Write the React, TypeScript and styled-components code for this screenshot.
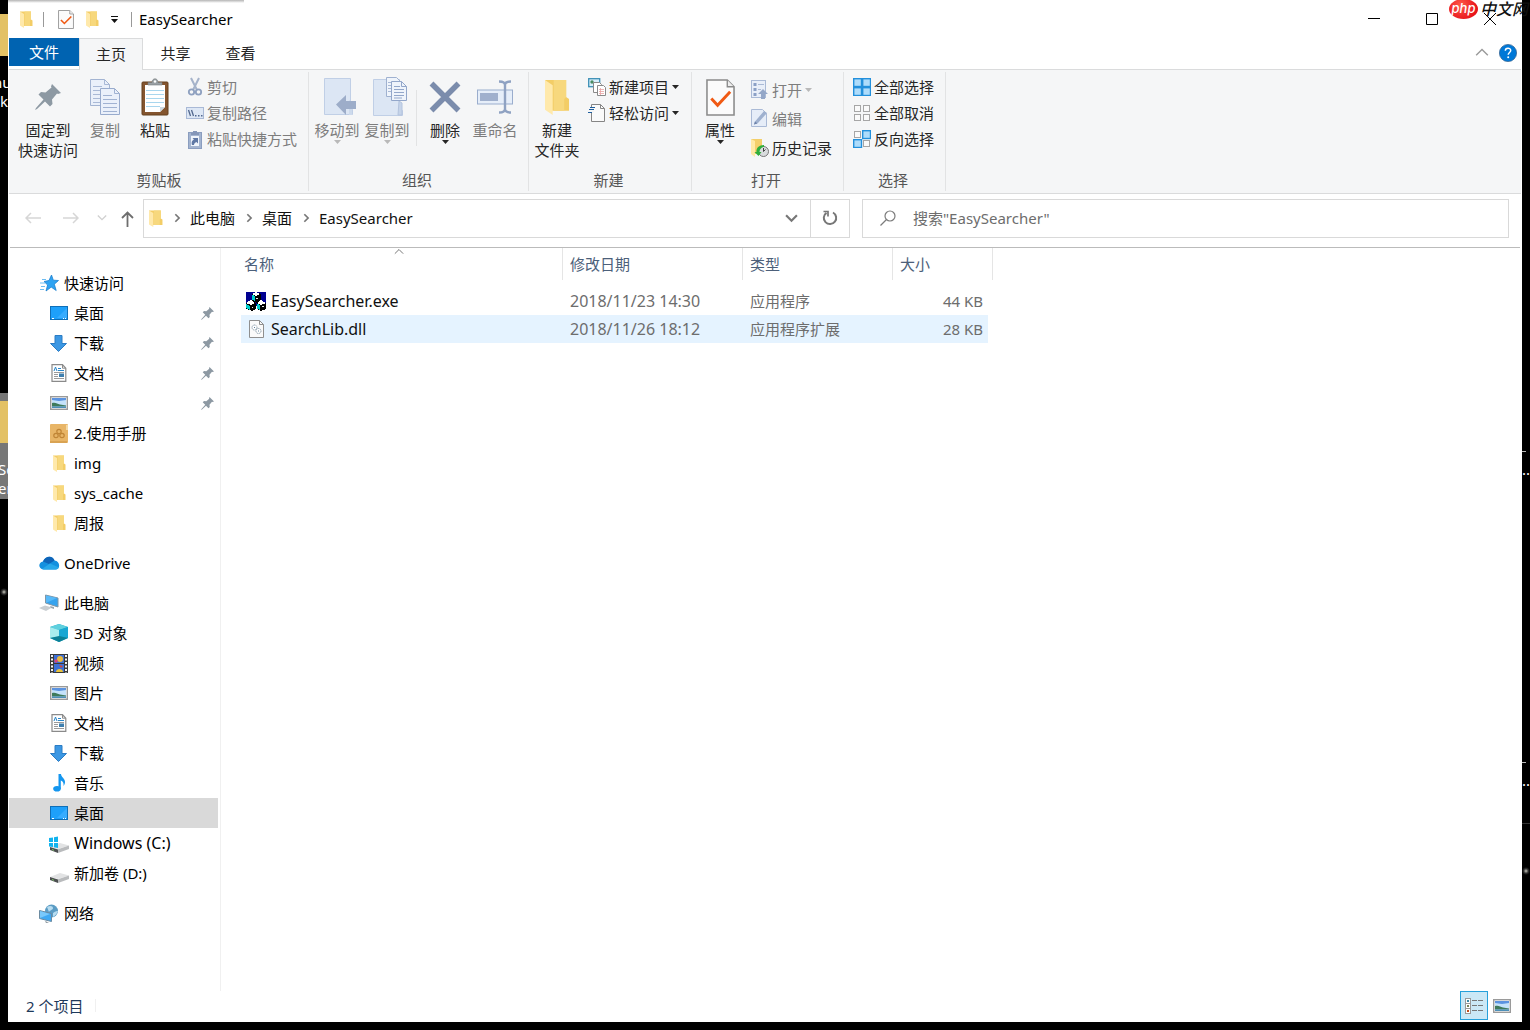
import React from 'react';
import styled, { createGlobalStyle, css } from 'styled-components';

const GlobalStyle = createGlobalStyle`
  * { box-sizing: border-box; }
  html, body { margin: 0; height: 100%; background: #000; }
  body, button, input, table {
    font-family: "Noto Sans", "Noto Sans CJK SC", sans-serif;
    font-size: 15px;
    line-height: 20px;
    color: #000;
  }
  button { border: 0; padding: 0; margin: 0; background: transparent; white-space: nowrap; }
  svg { display: block; flex: none; }
`;

/* ---------- desktop ---------- */

const Desktop = styled.div`
  position: relative;
  display: flex;
  height: 100vh;
  padding: 0 8px 8px;
  overflow: hidden;
  background: #000;
`;

const EdgeStrip = styled.div<{ $side: 'left' | 'right' }>`
  position: absolute;
  top: 0;
  bottom: 0;
  ${(p) => p.$side}: 0;
  width: 8px;
  overflow: hidden;
  color: #fff;
`;

const DesktopTile = styled.div<{ $top: number; $height: number; $color: string; $width?: number }>`
  position: absolute;
  left: 0;
  width: ${(p) => p.$width ?? 8}px;
  top: ${(p) => p.$top}px;
  height: ${(p) => p.$height}px;
  background: ${(p) => p.$color};
`;

const DesktopText = styled.span<{ $top: number; $left: number }>`
  position: absolute;
  top: ${(p) => p.$top}px;
  left: ${(p) => p.$left}px;
`;

const Star = styled.i<{ $top: number }>`
  position: absolute;
  top: ${(p) => p.$top}px;
  left: 0;
  width: 8px;
  height: 8px;
  background: radial-gradient(circle, #c9c9bd 0, #333 40%, transparent 70%);
`;

/* ---------- window frame ---------- */

const Window = styled.main`
  position: relative;
  flex: 1;
  min-width: 0;
  display: flex;
  flex-direction: column;
  padding: 0 1px;
  background: #fff;
`;

const TopShadow = styled.div`
  position: absolute;
  top: 0;
  left: 0;
  width: 236px;
  height: 3px;
  background: linear-gradient(#b4b4b4, #fff);
`;

const TitleBar = styled.header`
  display: flex;
  align-items: center;
  height: 38px;
  flex: none;
  padding: 0 2px 0 11px;
`;

const Divider = styled.i<{ $color: string; $height: number }>`
  width: 1px;
  height: ${(p) => p.$height}px;
  background: ${(p) => p.$color};
  flex: none;
`;

const QuickTools = styled.div`
  display: flex;
  align-items: center;
  gap: 10px;
  margin-right: 7px;
  button { display: flex; }
`;

const QuickGroup = styled.div`
  display: flex;
  align-items: center;
  gap: 12px;
  padding: 0 3px 0 4px;
`;

const Title = styled.h1`
  flex: 1;
  margin: 0;
  font-size: 15px;
  font-weight: 400;
`;

const ControlButton = styled.button`
  display: flex;
  width: 58px;
  height: 38px;
  align-items: center;
  justify-content: center;
`;

const Watermark = styled.div`
  position: absolute;
  top: -1px;
  right: -8px;
  display: flex;
  align-items: center;
  gap: 2px;
  width: 81px;
  height: 20px;
  white-space: nowrap;
  font-style: italic;
  font-weight: 500;
  font-size: 16px;
  color: #111;
`;

const WatermarkOval = styled.span`
  flex: none;
  width: 29px;
  height: 20px;
  border-radius: 50%;
  background: radial-gradient(circle at 40% 30%, #ff5a4a, #e8151b 70%);
  color: #fff;
  font-family: Inter, sans-serif;
  font-size: 13px;
  line-height: 19px;
  text-align: center;
`;

/* ---------- tabs ---------- */

const Tabs = styled.nav`
  display: flex;
  align-items: flex-start;
  height: 32px;
  flex: none;
  border-bottom: 1px solid #dadbdc;
`;

const Tab = styled.button<{ $kind?: 'file' | 'active' }>`
  width: 65px;
  height: 30px;
  color: #262626;
  ${(p) =>
    p.$kind === 'file' &&
    css`
      width: 70px;
      height: 28px;
      background: #0063b1;
      color: #fff;
    `}
  ${(p) =>
    p.$kind === 'active' &&
    css`
      width: 64px;
      height: 32px;
      padding-bottom: 2px;
      background: #f5f6f7;
      border: 1px solid #dadbdc;
      border-bottom: 0;
    `}
`;

const TabTools = styled.div`
  display: flex;
  align-items: center;
  gap: 10px;
  height: 30px;
  margin-left: auto;
  padding-right: 4px;
  button { display: flex; }
`;

/* ---------- ribbon ---------- */

const Ribbon = styled.section`
  display: flex;
  flex: none;
  height: 124px;
  background: #f5f6f7;
  border-bottom: 1px solid #dadbdc;
`;

const Group = styled.section<{ $width: number; $pad: number }>`
  display: flex;
  flex-direction: column;
  justify-content: space-between;
  width: ${(p) => p.$width}px;
  margin: 2px 0;
  padding-left: ${(p) => p.$pad}px;
  padding-bottom: 1px;
  border-right: 1px solid #e2e3e4;
`;

const GroupBody = styled.div`
  display: flex;
  padding-top: 2px;
`;

const GroupLabel = styled.h2`
  margin: 0 0 0 -6px;
  font-size: 15px;
  font-weight: 400;
  color: #555;
  text-align: center;
`;

const LargeButton = styled.button<{ $wide?: boolean; $dim?: boolean }>`
  display: flex;
  flex-direction: column;
  align-items: center;
  width: ${(p) => (p.$wide ? 64 : 50)}px;
  color: ${(p) => (p.$dim ? '#7d7d7d' : '#262626')};
`;

const LargeIcon = styled.span`
  display: flex;
  height: 46px;
  align-items: center;
`;

const SmallColumn = styled.div<{ $row: number }>`
  display: flex;
  flex-direction: column;
  padding: ${(p) => (p.$row > 26 ? 1 : 0)}px 0 0 6px;
  button { height: ${(p) => p.$row}px; }
`;

const SmallButton = styled.button<{ $dim?: boolean }>`
  display: flex;
  align-items: center;
  gap: 3px;
  color: ${(p) => (p.$dim ? '#7d7d7d' : '#262626')};
`;

const RibbonDivider = styled.i`
  width: 1px;
  height: 56px;
  margin: 16px 3px 0 4px;
  background: #e2e3e4;
`;

/* ---------- address row ---------- */

const AddressRow = styled.section`
  display: flex;
  align-items: center;
  flex: none;
  height: 54px;
  margin: 0 1px;
  padding: 0 11px 5px 15px;
  border-bottom: 1px solid #bbb;
`;

const NavButtons = styled.div`
  display: grid;
  grid-template-columns: 38px 34px 24px 13px;
  align-items: center;
  flex: none;
  margin-right: 9px;
  button { display: flex; }
`;

const AddressBox = styled.div`
  display: flex;
  align-items: center;
  flex: 700 1 0;
  height: 39px;
  margin-right: 12px;
  padding-left: 5px;
  border: 1px solid #d9d9d9;
`;

const Crumb = styled.button`
  color: #111;
`;

const Chevron = styled.span`
  display: flex;
  justify-content: center;
  width: 27px;
`;

const AddressEnd = styled.button<{ $line?: boolean }>`
  display: flex;
  align-items: center;
  justify-content: center;
  width: 38px;
  height: 37px;
  ${(p) => p.$line && 'width: 39px; border-left: 1px solid #d9d9d9;'}
`;

const Spacer = styled.span`
  flex: 1;
`;

const SearchBox = styled.label`
  display: flex;
  align-items: center;
  gap: 17px;
  flex: 628 1 0;
  height: 39px;
  padding-left: 17px;
  border: 1px solid #d9d9d9;
`;

const SearchInput = styled.input`
  flex: 1;
  min-width: 0;
  border: 0;
  padding: 0;
  outline: 0;
  background: transparent;
  &::placeholder { color: #6d6d6d; opacity: 1; }
`;

/* ---------- content ---------- */

const Body = styled.div`
  display: flex;
  flex: 1;
  min-height: 0;
`;

const NavPane = styled.nav`
  flex: none;
  width: 212px;
  padding: 20px 2px 0 0;
  border-right: 1px solid #f0f0f0;
`;

const NavSection = styled.ul`
  list-style: none;
  margin: 0 0 10px;
  padding: 0;
`;

const NavItem = styled.button<{ $level: number; $selected?: boolean; $latin?: boolean }>`
  display: flex;
  align-items: center;
  gap: 4px;
  width: 100%;
  height: 30px;
  padding-left: ${(p) => (p.$level ? 39 : 29)}px;
  font-size: ${(p) => (p.$latin ? 16 : 15)}px;
  background: ${(p) => (p.$selected ? '#d9d9d9' : 'transparent')};
`;

const NavIcon = styled.span`
  display: flex;
  align-items: center;
  justify-content: center;
  width: 22px;
`;

const NavPin = styled.span`
  margin: 0 4px 0 auto;
`;

const FilePane = styled.div`
  flex: 1;
  min-width: 0;
  padding-left: 15px;
`;

const FileTable = styled.table`
  width: 757px;
  table-layout: fixed;
  border-collapse: collapse;
  text-align: left;
`;

const HeadCell = styled.th`
  height: 39px;
  padding: 0;
  vertical-align: top;
  font-weight: 400;
  color: #4c607a;
`;

const HeadLabel = styled.div<{ $first?: boolean }>`
  position: relative;
  height: 32px;
  padding: 6px 0 0 ${(p) => (p.$first ? 8 : 7)}px;
  border-right: 1px solid #e5e5e5;
`;

const SortMark = styled.span`
  position: absolute;
  top: -1px;
  left: 50%;
  margin-left: -5px;
`;

const FileRow = styled.tr<{ $hover?: boolean }>`
  height: 28px;
  ${(p) =>
    p.$hover &&
    css`
      background: linear-gradient(#e5f3ff, #e5f3ff) 5px 0 / calc(100% - 10px) 100% no-repeat;
    `}
`;

const Cell = styled.td<{ $right?: boolean; $latin?: boolean }>`
  padding: 0 10px 0 7px;
  font-size: ${(p) => (p.$latin ? 16 : 15)}px;
  color: #6d6d6d;
  text-align: ${(p) => (p.$right ? 'right' : 'left')};
`;

const FileName = styled.div`
  display: flex;
  align-items: center;
  gap: 4px;
  padding-left: 2px;
  color: #111;
`;

const StatusBar = styled.footer`
  display: flex;
  align-items: center;
  flex: none;
  height: 31px;
  padding: 0 5px 2px 17px;
  color: #1e395b;
`;

const StatusText = styled.span`
  margin-right: 12px;
`;

const ViewButton = styled.button<{ $on?: boolean }>`
  display: flex;
  align-items: center;
  justify-content: center;
  width: 28px;
  height: 29px;
  ${(p) => p.$on && 'background: #cbe8f6; border: 1px solid #26a0da;'}
`;

/* ---------- icons ---------- */

const Folder = ({ w = 13, h = 17 }: { w?: number; h?: number }) => (
  <svg width={w} height={h} viewBox="0 0 13 17" preserveAspectRatio="none">
    <path d="M0 .5h11v8l1.500 1V15H3z" fill="#f3cd66" />
    <path d="M4.500.5H11v8l-1 1V15H4.500z" fill="#f7d87d" />
    <path d="M0 .5L4 3v14l-4-2.500z" fill="#ffe9ab" />
  </svg>
);

const CheckDoc = ({ w = 16, h = 19 }: { w?: number; h?: number }) => (
  <svg width={w} height={h} viewBox="0 0 30 38" preserveAspectRatio="none">
    <path d="M1 1h21l7 7v29H1z" fill="#fbfbfb" stroke="#8a8a8a" strokeWidth="1.6" />
    <path d="M22 1v7h7" fill="#eee" stroke="#8a8a8a" strokeWidth="1.4" />
    <path d="M5.500 20l6.500 7 13-14" fill="none" stroke="#f05a14" strokeWidth="3" />
  </svg>
);

const DownMark = ({ color = '#262626' }: { color?: string }) => (
  <svg width="7" height="4" viewBox="0 0 7 4">
    <path d="M0 0h7L3.500 4z" fill={color} />
  </svg>
);

const PinIcon = ({ s = 13 }: { s?: number }) => (
  <svg width={s} height={s} viewBox="0 0 26 26">
    <path d="M17 0l9 9-3 1-1-.5-5 6 .5 4.500-2.500 2.500-5-5L2 25l-2 1 1-2 7.500-8.500-5-5L6 8l4.500.5 6-5-.5-1z" fill="#8d99a3" />
  </svg>
);

const CopyPages = ({ w = 30, h = 36 }: { w?: number; h?: number }) => (
  <svg width={w} height={h} viewBox="0 0 30 36">
    <path d="M.5.5h14l5 5v21H.5z" fill="#eaf0fa" stroke="#a3b4d2" />
    <path d="M14.500.5v5h5M3 7.500h9M3 11.500h14M3 15.500h14M3 19.500h14M3 23.500h14" fill="none" stroke="#a9b9d6" />
    <path d="M10.500 9.500h14l5 5v21h-19z" fill="#eaf0fa" stroke="#98abcd" />
    <path d="M24.500 9.500v5h5M13 16.500h9M13 20.500h14M13 24.500h14M13 28.500h14M13 32.500h14" fill="none" stroke="#a0b2d2" />
  </svg>
);

const PasteIcon = () => (
  <svg width="28" height="38" viewBox="0 0 28 38">
    <rect x="1" y="4" width="26" height="33" rx="1" fill="#84552f" stroke="#65401f" />
    <path d="M4 7h20v22l-5 5H4z" fill="#fff" />
    <path d="M24 29h-5v5z" fill="#cdd8e0" />
    <path d="M5 12.500h18M5 16.500h18M5 20.500h18M5 24.500h18M5 28.500h14" stroke="#a9d6ee" />
    <path d="M7 7V4.500h4c0-5 6-5 6 0h4V7z" fill="#9aa0a4" stroke="#777d80" strokeWidth=".6" />
    <circle cx="14" cy="3.500" r="1.200" fill="#fff" />
  </svg>
);

const Scissors = () => (
  <svg width="18" height="20" viewBox="0 0 18 20" fill="none">
    <path d="M5 1l6 12M13 1L7 13" stroke="#a5b3ca" strokeWidth="2" />
    <circle cx="5.500" cy="15" r="2.700" stroke="#8fa1c0" strokeWidth="1.800" />
    <circle cx="12.500" cy="15" r="2.700" stroke="#8fa1c0" strokeWidth="1.800" />
  </svg>
);

const PathIcon = () => (
  <svg width="18" height="12" viewBox="0 0 18 12">
    <rect x=".5" y=".5" width="17" height="11" fill="#dde7f5" stroke="#a9b9d6" />
    <path d="M2.500 3l2 6M5.500 3l2 6" stroke="#52688f" strokeWidth="1.300" />
    <path d="M9 8h1.500v1.500H9zM12 8h1.500v1.500H12zM15 8h1.500v1.500H15z" fill="#52688f" />
  </svg>
);

const ShortcutIcon = () => (
  <svg width="18" height="19" viewBox="0 0 18 19">
    <rect x="2.500" y="2.500" width="13" height="16" fill="#a3b4d0" stroke="#8a9dbf" />
    <path d="M5 3h8v2H5zM7 1h4v3H7z" fill="#8496b8" />
    <rect x="5" y="6" width="8" height="10" fill="#eff4fb" />
    <path d="M6 15c-1-3 .5-5 2-5.500L6.500 8H12v5.500l-1.500-1.500C9 12.500 8 13.500 8 15z" fill="#5f78a5" />
  </svg>
);

const MoveTo = () => (
  <svg width="38" height="38" viewBox="-6 0 38 38">
    <path d="M.5.5h26v30l2 1v5H.5z" fill="#dce6f4" stroke="#c0cfe6" />
    <path d="M25 22l3 2v13h-3z" fill="#cddaec" />
    <path d="M12 26.500L22 17v6h10v8H22v6z" fill="#9dadc9" />
  </svg>
);

const CopyTo = () => (
  <svg width="40" height="40" viewBox="-6 0 40 40">
    <path d="M.5 2.500h26v30l3 1v5H.5z" fill="#dce6f4" stroke="#c0cfe6" />
    <path d="M26 24l3 2v12h-4z" fill="#c6d4e9" stroke="#b4c4de" />
    <path d="M13.500.5h10l4 4v15h-14z" fill="#eff4fb" stroke="#9fb1d0" />
    <path d="M15 5.500h8M15 8.500h8M15 11.500h8M15 14.500h8" stroke="#a9b9d6" />
    <path d="M18.500 4.500h10l5 5v14h-15z" fill="#eff4fb" stroke="#93a7ca" />
    <path d="M28.500 4.500v5h5M21 9.500h6M21 12.500h10M21 15.500h10M21 18.500h10M21 21h8" fill="none" stroke="#93a7ca" />
  </svg>
);

const DeleteIcon = () => (
  <svg width="32" height="32" viewBox="0 0 32 32">
    <path d="M2.500 2.500l27 27M29.500 2.500l-27 27" stroke="#7b8cac" strokeWidth="5.500" />
  </svg>
);

const RenameIcon = () => (
  <svg width="36" height="34" viewBox="0 0 36 34">
    <rect x=".5" y="10" width="35" height="14" fill="#e6eef9" stroke="#9aadcd" />
    <rect x="3" y="13" width="18" height="8" fill="#a0b0cd" />
    <path d="M22 1.500c4 0 6 1 6 3.500v24c0 2.500-2 3.500-6 3.500M34 1.500c-4 0-6 1-6 3.500M28 29c0 2.500 2 3.500 6 3.500" fill="none" stroke="#8fa2c2" strokeWidth="2.400" />
  </svg>
);

const NewItem = () => (
  <svg width="18" height="18" viewBox="0 0 18 18">
    <rect x=".7" y=".7" width="11" height="8" fill="#d7eefa" stroke="#3b8fb5" strokeWidth="1.300" />
    <circle cx="4" cy="4" r="1.700" fill="#4a8c62" />
    <path d="M5.500 4.500h6l2 2v8h-8z" fill="#fff" stroke="#8a8a8a" />
    <path d="M9.500 7.500h6l2 2v8h-8z" fill="#fff" stroke="#8a8a8a" />
    <path d="M11 11.500h5M11 13.500h5M11 15.500h5M12.500 10v7" stroke="#e8a3a3" strokeWidth=".8" />
  </svg>
);

const EasyAccess = () => (
  <svg width="18" height="18" viewBox="0 0 18 18">
    <path d="M3.500.5h9l4 4v13h-13z" fill="#fafafa" stroke="#858585" />
    <path d="M12.500.5v4h4" fill="none" stroke="#858585" />
    <path d="M2 3h4v6H0z" fill="#f5f6f7" />
    <path d="M2 3.500h5M1 5.500h5M0 8.500h4" stroke="#1f5f9e" strokeWidth="1.200" />
  </svg>
);

const OpenIcon = () => (
  <svg width="18" height="19" viewBox="0 0 18 19">
    <rect x=".5" y=".5" width="14" height="17" fill="#e9eff9" stroke="#aabad6" />
    <path d="M2.500 3h3v3h-3zM2.500 8h3v3h-3zM2.500 13h3v3h-3z" fill="#8ba0c6" />
    <path d="M7 4.500h6M7 9.500h3" stroke="#aabad6" />
    <path d="M12 9l5 5h-3v5h-4v-5H7z" fill="#94a7c8" />
  </svg>
);

const EditIcon = () => (
  <svg width="18" height="19" viewBox="0 0 18 19">
    <path d="M.5.5h11l4 4v13H.5z" fill="#e6edf8" stroke="#aabad6" />
    <path d="M3 15.500l1-3L13 2l3 2-9 10z" fill="#9fb1cf" />
    <path d="M3 15.500l1-3 2.500 2z" fill="#6c82aa" />
  </svg>
);

const HistoryIcon = () => (
  <svg width="18" height="18" viewBox="0 0 18 18">
    <path d="M0 0h11v15H0z" fill="#f3cf6b" />
    <path d="M0 0l4 2v16l-4-3z" fill="#ffe9a6" />
    <circle cx="12.500" cy="12.500" r="5" fill="#d9dcde" stroke="#777" />
    <path d="M12.500 9v3.500l2-2" stroke="#444" fill="none" />
    <path d="M13 6c-5 0-8 3-7.500 7H3.500l4 4 3-4H8.500c0-3 2-5 4.500-5z" fill="#2fae3c" />
  </svg>
);

const SelectGrid = ({ on }: { on: boolean[] }) => (
  <svg width="18" height="18" viewBox="0 0 18 18">
    {on.map((v, i) => (
      <rect
        key={i}
        x={(i % 2) * 9 + (v ? 0.7 : 1.5)}
        y={Math.floor(i / 2) * 9 + (v ? 0.7 : 1.5)}
        width={v ? 7.8 : 6}
        height={v ? 7.8 : 6}
        fill={v ? '#aedcfb' : '#fafafa'}
        stroke={v ? '#2390dc' : '#a6a6a6'}
        strokeWidth={v ? 1.4 : 1}
      />
    ))}
  </svg>
);

const Arrow = ({ flip }: { flip?: boolean }) => (
  <svg width="16" height="12" viewBox="0 0 16 12" fill="none" stroke="#d6d6d6" strokeWidth="1.500">
    <path d={flip ? 'M0 6h15M10 1l5 5-5 5' : 'M16 6H1M6 1L1 6l5 5'} />
  </svg>
);

const UpArrow = () => (
  <svg width="13" height="18" viewBox="0 -2 13 18" fill="none" stroke="#6e6e6e" strokeWidth="1.800">
    <path d="M6.500 16V1.500M1 7l5.500-5.500L12 7" />
  </svg>
);

const Caret = ({ w = 12, color = '#6b6b6b', stroke = 2, dir = 'down' }: { w?: number; color?: string; stroke?: number; dir?: 'down' | 'up' | 'right' }) => {
  const d = { down: 'M1 3l5 5 5-5', up: 'M1 8l5-5 5 5', right: 'M4 1.500L8.500 6 4 10.500' }[dir];
  return (
    <svg width={w} height={w} viewBox="0 0 12 12" fill="none" stroke={color} strokeWidth={stroke}>
      <path d={d} />
    </svg>
  );
};

const Refresh = () => (
  <svg width="16" height="16" viewBox="0 0 16 16" fill="none" stroke="#777" strokeWidth="2">
    <path d="M11 2.500a6.200 6.200 0 1 1-6.500.3" />
    <path d="M1.500 1.500H6v5" strokeWidth="1.700" />
  </svg>
);

const SearchGlyph = () => (
  <svg width="16" height="16" viewBox="0 0 16 16" fill="none" stroke="#7c7c7c" strokeWidth="1.200">
    <circle cx="10" cy="6" r="5" />
    <path d="M6.500 9.500L.5 15.500" />
  </svg>
);

const StarIcon = () => (
  <svg width="19" height="18" viewBox="0 0 19 18">
    <path d="M11.500 1l1.800 5.200 5.200.3-4.200 3.700 1.900 6.300-5-3.400L6 17l1.600-6L4 7.500l5-1z" fill="#2ea3f2" stroke="#1a7fce" strokeWidth=".8" />
    <path d="M2 5.500h4M0 9h5M1 12.500h4M0 15.500h4" stroke="#6cbcf2" />
  </svg>
);

const DesktopIcon = () => (
  <svg width="18" height="14" viewBox="0 0 18 14">
    <rect x=".5" y=".5" width="17" height="13" fill="#1ea0fa" stroke="#0f6fb8" />
    <path d="M7 12L17 2v10z" fill="#37acff" />
    <path d="M2 12.500h2M13 12.500h1M15 12.500h1" stroke="#fff" />
  </svg>
);

const DownloadIcon = () => (
  <svg width="18" height="17" viewBox="0 0 18 17">
    <path d="M5 .5h7v8h4.500L8.500 16.500.5 8.500H5z" fill="#3b97e3" stroke="#2b7cc4" />
  </svg>
);

const DocumentIcon = () => (
  <svg width="16" height="18" viewBox="0 0 16 18">
    <path d="M1 .7h10.500l3.300 3.600v13H1z" fill="#fff" stroke="#8a8a8a" strokeWidth="1.200" />
    <path d="M11.500.7v3.500h3" fill="none" stroke="#8a8a8a" />
    <path d="M3 7l1.500-4L6 7M7 4.500h3M7 6.500h6" stroke="#2b87c9" fill="none" />
    <path d="M3 8.500h10M3 10.500h4M3 12.500h4M3 14.500h10" stroke="#9a9a9a" />
    <path d="M8 9.500h5v3.500H8z" fill="#3f7fae" />
  </svg>
);

const PictureIcon = () => (
  <svg width="18" height="14" viewBox="0 0 18 14">
    <rect x=".7" y=".7" width="16.600" height="12.600" fill="#fff" stroke="#9a9a9a" strokeWidth="1.400" />
    <path d="M2 2h14v10H2z" fill="#c4e2fa" />
    <path d="M2 2h14v2L9 5 2 4z" fill="#5b93e0" />
    <path d="M2 7c4-1 5 1 8 1.500l6 1v1H2z" fill="#3f7a5b" />
    <path d="M2 10.500h14V12H2z" fill="#4d8fb8" />
  </svg>
);

const ManualIcon = () => (
  <svg width="18" height="19" viewBox="0 0 18 19">
    <rect width="18" height="19" rx="1" fill="#e8b567" />
    <path d="M16 1h2v5h-2z" fill="#f4d9a5" />
    <path d="M0 17h17v2H0z" fill="#d9a353" />
    <g fill="none" stroke="#c08536" strokeWidth="1.200">
      <circle cx="9" cy="7.500" r="2.200" />
      <circle cx="6" cy="11.500" r="2.200" />
      <circle cx="12" cy="11.500" r="2.200" />
    </g>
  </svg>
);

const CloudIcon = () => (
  <svg width="21" height="14" viewBox="0 0 21 14">
    <path d="M4.500 13.500C-1 13-1 6.500 4 5.500 6-.5 14-1 15.500 4.500 21 5 22 13 16.500 13.500z" fill="#1490df" />
    <path d="M4 5.500C6-.5 14-1 15.500 4.500L10 8z" fill="#0f64b8" />
    <path d="M3 13l8-5.500 9 4c-1 1.500-2 2-3.500 2h-12z" fill="#28a8ea" />
  </svg>
);

const ComputerIcon = () => (
  <svg width="20" height="18" viewBox="0 0 20 18">
    <path d="M6.500 1L19 4v9L6.500 9z" fill="#36a3ee" stroke="#8296a5" />
    <path d="M7 1.500L18 4l-11 5z" fill="#58b9f8" />
    <path d="M0 14l6-2.500 7 2L7 17z" fill="#c9ced2" />
    <path d="M11 12l4 1v2l-3-1z" fill="#9aa5ad" />
  </svg>
);

const CubeIcon = () => (
  <svg width="18" height="18" viewBox="0 0 18 18">
    <path d="M9 0l9 3v11l-9 4-9-4V3z" fill="#18a9c9" />
    <path d="M9 0l9 3-9 3-9-3z" fill="#5fd0de" />
    <path d="M0 3l9 3v7l-9 1z" fill="#a8ecee" />
    <path d="M9 6l9-3v11l-9-2z" fill="#19a7d3" />
    <path d="M0 14l9-2 9 2-9 4z" fill="#0c8097" />
  </svg>
);

const VideoIcon = () => (
  <svg width="18" height="19" viewBox="0 0 18 19">
    <rect width="18" height="19" fill="#3a3a3a" />
    <path d="M4 1h10v8H4zM4 10h10v8H4z" fill="#3d6fd6" />
    <circle cx="10" cy="5" r="3" fill="#e9b83c" />
    <circle cx="6" cy="7" r="1.700" fill="#d8447c" />
    <path d="M9 11l4 1-2 2z" fill="#d94434" />
    <path d="M6 18c0-4 7-4 7 0z" fill="#e9c23c" />
    <path d="M2 1v18M16 1v18" stroke="#f2f2f2" strokeWidth="2" strokeDasharray="2 1.500" />
  </svg>
);

const MusicIcon = () => (
  <svg width="14" height="18" viewBox="0 0 14 18">
    <ellipse cx="5" cy="14.800" rx="3.800" ry="2.800" fill="#1496ef" />
    <path d="M6.500 0H9c0 3 4 4.500 4 8 0 1.500-.5 2.500-1.500 4 .5-3-.5-4.500-2.700-5.500V15H6.500z" fill="#1496ef" />
  </svg>
);

const DriveIcon = ({ windows }: { windows?: boolean }) => (
  <svg width="20" height="19" viewBox="0 0 20 19">
    <path d="M1 13l10-4 9 2.500L9 15z" fill="#e2e3e4" />
    <path d="M1 13l8 2.500V19l-8-3z" fill="#4c4f50" />
    <path d="M9 15.300l11-3.800V15L9 19z" fill="#b9bbbd" />
    <path d="M3 15.500l2 .8" stroke="#7dc66a" />
    {windows && <path d="M0 4l4-.5V8H0zM5 3.300L9 2.500V8H5zM0 9h4v4l-4-.5zM5 9h4v5l-4-.8z" fill="#12b3ee" />}
  </svg>
);

const NetworkIcon = () => (
  <svg width="20" height="19" viewBox="0 0 20 19">
    <circle cx="12.500" cy="7" r="6.500" fill="#5b9cc4" />
    <path d="M8 3c3-2 6-1 6 1s-3 2-4 4zM14 9c3-2 4-2 5-2-1 3-3 5-5 6z" fill="#b7dcf0" />
    <path d="M.5 6.500l12 3v8l-12-3z" fill="#3fa9f3" stroke="#6c8ba1" />
    <path d="M1 7l10 3-10 4z" fill="#79c9fb" />
    <path d="M6 17l4 1.500-3 .5z" fill="#8a959c" />
  </svg>
);

const ExeIcon = () => (
  <svg width="20" height="19" viewBox="0 0 20 19" shapeRendering="crispEdges">
    <path d="M0 0h20v14H0z" fill="#000090" />
    <path d="M6 2l4-2 5 2v6l-4 3-5-2zM0 11l5-3 5 3v6l-4 2-6-2zM11 11l4-3 5 3v6l-5 2-4-2z" fill="#000" />
    <path d="M6 2l4-2 4 2-4 2zM0 11l5-3 4 3-4 2zM11 11l4-3 5 3-5 2z" fill="#fff" />
    <path d="M6 3l3 1v5L6 8zM0 12l4 2v4l-4-2zM11 12l3 1v5l-3-1z" fill="#00d0d0" />
    <path d="M10 6h2v1h-2zM6 15h1v1H6zM16 14h2v1h-2z" fill="#e8e8e8" />
  </svg>
);

const DllIcon = () => (
  <svg width="15" height="18" viewBox="0 0 15 18">
    <path d="M.5.5h10l4 4v13H.5z" fill="#fafafa" stroke="#8f8f8f" />
    <path d="M10.500.5v4h4" fill="none" stroke="#8f8f8f" />
    <g fill="#fff" stroke="#8ea0ae" strokeDasharray="1.500 .6">
      <circle cx="5.500" cy="7.500" r="2.500" />
      <circle cx="9.500" cy="11" r="2.500" />
    </g>
    <path d="M5 7.500h1M9 11h1" stroke="#5f7f9a" />
  </svg>
);

const DetailsView = () => (
  <svg width="18" height="16" viewBox="0 0 18 16" shapeRendering="crispEdges">
    <path d="M0 0h6v16H0z" fill="#999" />
    <path d="M1 1h4v4H1zM1 6h4v4H1zM1 11h4v4H1z" fill="#fff" />
    <path d="M2 2h2v2H2z" fill="#3b87a5" />
    <path d="M2 7h2v2H2z" fill="#77835a" />
    <path d="M2 12h2v2H2z" fill="#c34a18" />
    <path d="M7 2h5v1H7zM13 2h5v1h-5zM7 7h5v1H7zM13 7h5v1h-5zM7 12h5v1H7zM13 12h5v1h-5z" fill="#777" />
  </svg>
);

/* ---------- data ---------- */

type Entry = { label: string; icon: React.ReactNode; level: number; pinned?: boolean; selected?: boolean; latin?: boolean };

const sections: Entry[][] = [
  [
    { label: '快速访问', icon: <StarIcon />, level: 0 },
    { label: '桌面', icon: <DesktopIcon />, level: 1, pinned: true },
    { label: '下载', icon: <DownloadIcon />, level: 1, pinned: true },
    { label: '文档', icon: <DocumentIcon />, level: 1, pinned: true },
    { label: '图片', icon: <PictureIcon />, level: 1, pinned: true },
    { label: '2.使用手册', icon: <ManualIcon />, level: 1 },
    { label: 'img', icon: <Folder />, level: 1 },
    { label: 'sys_cache', icon: <Folder />, level: 1 },
    { label: '周报', icon: <Folder />, level: 1 },
  ],
  [{ label: 'OneDrive', icon: <CloudIcon />, level: 0 }],
  [
    { label: '此电脑', icon: <ComputerIcon />, level: 0 },
    { label: '3D 对象', icon: <CubeIcon />, level: 1 },
    { label: '视频', icon: <VideoIcon />, level: 1 },
    { label: '图片', icon: <PictureIcon />, level: 1 },
    { label: '文档', icon: <DocumentIcon />, level: 1 },
    { label: '下载', icon: <DownloadIcon />, level: 1 },
    { label: '音乐', icon: <MusicIcon />, level: 1 },
    { label: '桌面', icon: <DesktopIcon />, level: 1, selected: true },
    { label: 'Windows (C:)', icon: <DriveIcon windows />, level: 1, latin: true },
    { label: '新加卷 (D:)', icon: <DriveIcon />, level: 1 },
  ],
  [{ label: '网络', icon: <NetworkIcon />, level: 0 }],
];

const files = [
  { name: 'EasySearcher.exe', date: '2018/11/23 14:30', type: '应用程序', size: '44 KB', icon: <ExeIcon /> },
  { name: 'SearchLib.dll', date: '2018/11/26 18:12', type: '应用程序扩展', size: '28 KB', icon: <DllIcon />, hover: true },
];

const Large = ({ icon, lines, wide, dim, menu }: { icon: React.ReactNode; lines: string[]; wide?: boolean; dim?: boolean; menu?: boolean }) => (
  <LargeButton $wide={wide} $dim={dim}>
    <LargeIcon>{icon}</LargeIcon>
    {lines.map((l) => (
      <span key={l}>{l}</span>
    ))}
    {menu && <DownMark color={dim ? '#b9b9b9' : '#262626'} />}
  </LargeButton>
);

const Small = ({ icon, label, dim, menu }: { icon: React.ReactNode; label: string; dim?: boolean; menu?: boolean }) => (
  <SmallButton $dim={dim}>
    {icon}
    <span>{label}</span>
    {menu && <DownMark color={dim ? '#b9b9b9' : '#262626'} />}
  </SmallButton>
);

export default function App() {
  return (
    <Desktop>
      <GlobalStyle />
      <EdgeStrip $side="left">
        <DesktopTile $top={14} $height={42} $color="#e3c165" />
        <DesktopText $top={72} $left={-7}>nu</DesktopText>
        <DesktopText $top={91} $left={0}>k</DesktopText>
        <DesktopTile $top={393} $height={106} $color="#777" />
        <DesktopTile $top={401} $height={42} $color="#e3c165" />
        <DesktopText $top={459} $left={-2}>Sc</DesktopText>
        <DesktopText $top={478} $left={-2}>er</DesktopText>
        <Star $top={588} />
      </EdgeStrip>
      <Window>
        <TopShadow />
        <TitleBar>
          <QuickTools>
            <Folder />
            <Divider $color="#999" $height={15} />
            <QuickGroup>
              <button aria-label="属性"><CheckDoc /></button>
              <button aria-label="新建文件夹"><Folder /></button>
              <button aria-label="自定义快速访问工具栏">
                <svg width="7" height="7" viewBox="0 0 7 7"><path d="M0 0h7v1H0zM0 3h7L3.500 7z" fill="#111" /></svg>
              </button>
            </QuickGroup>
            <Divider $color="#999" $height={15} />
          </QuickTools>
          <Title>EasySearcher</Title>
          <ControlButton aria-label="最小化">
            <svg width="12" height="12" viewBox="0 0 12 12"><path d="M0 5.500h12" stroke="#000" /></svg>
          </ControlButton>
          <ControlButton aria-label="最大化">
            <svg width="12" height="12" viewBox="0 0 12 12"><path d="M.5.5h11v11H.5z" fill="none" stroke="#000" /></svg>
          </ControlButton>
          <ControlButton aria-label="关闭">
            <svg width="12" height="12" viewBox="0 0 12 12"><path d="M0 0l12 12M12 0L0 12" stroke="#000" /></svg>
          </ControlButton>
          <Watermark><WatermarkOval>php</WatermarkOval>中文网</Watermark>
        </TitleBar>

        <Tabs>
          <Tab $kind="file">文件</Tab>
          <Tab $kind="active">主页</Tab>
          <Tab>共享</Tab>
          <Tab>查看</Tab>
          <TabTools>
            <button aria-label="折叠功能区"><Caret w={14} color="#9a9a9a" stroke={1.2} dir="up" /></button>
            <button aria-label="帮助">
              <svg width="18" height="18" viewBox="0 0 18 18">
                <circle cx="9" cy="9" r="8.600" fill="#0078d7" stroke="#2f5f8c" strokeWidth=".7" />
                <path d="M6.300 6.800c0-3.600 5.400-3.400 5.400-.3 0 2-2.500 2-2.500 4.300" fill="none" stroke="#fff" strokeWidth="1.500" />
                <circle cx="9.200" cy="13.200" r="1" fill="#fff" />
              </svg>
            </button>
          </TabTools>
        </Tabs>

        <Ribbon>
          <Group $width={300} $pad={7}>
            <GroupBody>
              <Large wide icon={<PinIcon s={26} />} lines={['固定到', '快速访问']} />
              <Large dim icon={<CopyPages />} lines={['复制']} />
              <Large icon={<PasteIcon />} lines={['粘贴']} />
              <SmallColumn $row={26}>
                <Small dim icon={<Scissors />} label="剪切" />
                <Small dim icon={<PathIcon />} label="复制路径" />
                <Small dim icon={<ShortcutIcon />} label="粘贴快捷方式" />
              </SmallColumn>
            </GroupBody>
            <GroupLabel>剪贴板</GroupLabel>
          </Group>
          <Group $width={220} $pad={3}>
            <GroupBody>
              <Large dim menu icon={<MoveTo />} lines={['移动到']} />
              <Large dim menu icon={<CopyTo />} lines={['复制到']} />
              <RibbonDivider />
              <Large menu icon={<DeleteIcon />} lines={['删除']} />
              <Large dim icon={<RenameIcon />} lines={['重命名']} />
            </GroupBody>
            <GroupLabel>组织</GroupLabel>
          </Group>
          <Group $width={163} $pad={3}>
            <GroupBody>
              <Large icon={<Folder w={25} h={36} />} lines={['新建', '文件夹']} />
              <SmallColumn $row={26}>
                <Small menu icon={<NewItem />} label="新建项目" />
                <Small menu icon={<EasyAccess />} label="轻松访问" />
              </SmallColumn>
            </GroupBody>
            <GroupLabel>新建</GroupLabel>
          </Group>
          <Group $width={152} $pad={3}>
            <GroupBody>
              <Large menu icon={<CheckDoc w={29} h={37} />} lines={['属性']} />
              <SmallColumn $row={29}>
                <Small dim menu icon={<OpenIcon />} label="打开" />
                <Small dim icon={<EditIcon />} label="编辑" />
                <Small icon={<HistoryIcon />} label="历史记录" />
              </SmallColumn>
            </GroupBody>
            <GroupLabel>打开</GroupLabel>
          </Group>
          <Group $width={102} $pad={3}>
            <GroupBody>
              <SmallColumn $row={26}>
                <Small icon={<SelectGrid on={[true, true, true, true]} />} label="全部选择" />
                <Small icon={<SelectGrid on={[false, false, false, false]} />} label="全部取消" />
                <Small icon={<SelectGrid on={[false, true, true, false]} />} label="反向选择" />
              </SmallColumn>
            </GroupBody>
            <GroupLabel>选择</GroupLabel>
          </Group>
        </Ribbon>

        <AddressRow>
          <NavButtons>
            <button aria-label="后退"><Arrow /></button>
            <button aria-label="前进"><Arrow flip /></button>
            <button aria-label="最近浏览的位置"><Caret w={10} color="#d0d0d0" stroke={1.6} /></button>
            <button aria-label="上移"><UpArrow /></button>
          </NavButtons>
          <AddressBox>
            <Folder w={14} />
            <Chevron><Caret w={10} color="#777" dir="right" /></Chevron>
            <Crumb>此电脑</Crumb>
            <Chevron><Caret w={10} color="#777" dir="right" /></Chevron>
            <Crumb>桌面</Crumb>
            <Chevron><Caret w={10} color="#777" dir="right" /></Chevron>
            <Crumb>EasySearcher</Crumb>
            <Spacer />
            <AddressEnd aria-label="以前的位置"><Caret w={13} color="#777" /></AddressEnd>
            <AddressEnd $line aria-label="刷新"><Refresh /></AddressEnd>
          </AddressBox>
          <SearchBox>
            <SearchGlyph />
            <SearchInput type="text" aria-label="搜索" placeholder={'搜索"EasySearcher"'} />
          </SearchBox>
        </AddressRow>

        <Body>
          <NavPane>
            {sections.map((items, i) => (
              <NavSection key={i}>
                {items.map((it) => (
                  <li key={it.label}>
                    <NavItem $level={it.level} $selected={it.selected} $latin={it.latin}>
                      <NavIcon>{it.icon}</NavIcon>
                      <span>{it.label}</span>
                      {it.pinned && <NavPin><PinIcon /></NavPin>}
                    </NavItem>
                  </li>
                ))}
              </NavSection>
            ))}
          </NavPane>
          <FilePane>
            <FileTable>
              <colgroup>
                <col width="327" />
                <col width="180" />
                <col width="150" />
                <col width="100" />
              </colgroup>
              <thead>
                <tr>
                  <HeadCell>
                    <HeadLabel $first>
                      名称
                      <SortMark><Caret w={10} color="#777" stroke={1.2} dir="up" /></SortMark>
                    </HeadLabel>
                  </HeadCell>
                  <HeadCell><HeadLabel>修改日期</HeadLabel></HeadCell>
                  <HeadCell><HeadLabel>类型</HeadLabel></HeadCell>
                  <HeadCell><HeadLabel>大小</HeadLabel></HeadCell>
                </tr>
              </thead>
              <tbody>
                {files.map((f) => (
                  <FileRow key={f.name} $hover={f.hover}>
                    <Cell $latin>
                      <FileName><NavIcon>{f.icon}</NavIcon>{f.name}</FileName>
                    </Cell>
                    <Cell $latin>{f.date}</Cell>
                    <Cell>{f.type}</Cell>
                    <Cell $right>{f.size}</Cell>
                  </FileRow>
                ))}
              </tbody>
            </FileTable>
          </FilePane>
        </Body>

        <StatusBar>
          <StatusText>2 个项目</StatusText>
          <Divider $color="#f0f0f0" $height={13} />
          <Spacer />
          <ViewButton $on aria-label="详细信息"><DetailsView /></ViewButton>
          <ViewButton aria-label="大缩略图"><PictureIcon /></ViewButton>
        </StatusBar>
      </Window>
      <EdgeStrip $side="right">
        <DesktopTile $top={451} $height={1} $width={4} $color="#bbb" />
        <DesktopText $top={459} $left={0}>..</DesktopText>
        <DesktopTile $top={762} $height={1} $width={4} $color="#bbb" />
        <DesktopText $top={770} $left={0}>..</DesktopText>
        <DesktopTile $top={823} $height={1} $color="#333" />
        <Star $top={867} />
      </EdgeStrip>
    </Desktop>
  );
}
